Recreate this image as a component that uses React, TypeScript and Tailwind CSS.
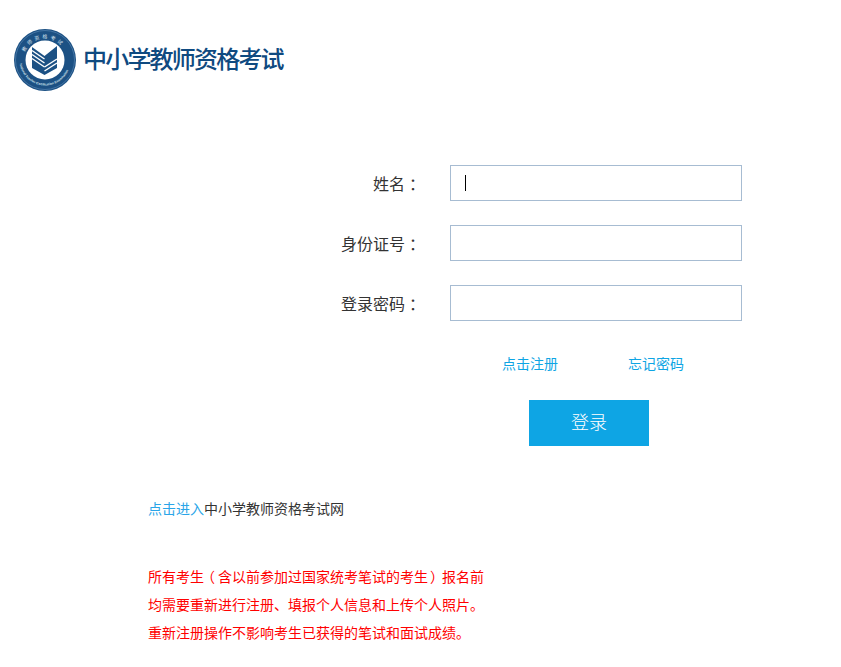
import React from 'react';

const Logo: React.FC = () => (
    <svg width="64" height="64" viewBox="0 0 64 64" className="shrink-0">
        <defs>
            <path id="arcTop" d="M10.5 32a21.5 21.5 0 0 1 43 0" />
            <path id="arcBottom" d="M6.5 32a25.5 25.5 0 0 0 51 0" />
        </defs>
        <circle cx="32" cy="32" r="31" fill="#1c5184" />
        <circle cx="32" cy="32" r="29.5" fill="none" stroke="#5f8db8" strokeWidth="0.6" />
        <circle cx="32" cy="32" r="19.5" fill="#fff" />
        <text fontSize="5" fill="#dbe6f0" fontFamily="'Noto Sans CJK SC', sans-serif" letterSpacing="2.6">
            <textPath href="#arcTop" startOffset="8">教师资格考试</textPath>
        </text>
        <text fontSize="3.2" fill="#dbe6f0" fontFamily="'Liberation Sans', sans-serif" fontWeight="700">
            <textPath href="#arcBottom" startOffset="4">National Teacher Certification Examination</textPath>
        </text>
        {/* open book */}
        <path d="M19 19 31.5 28 44 18 44 40 31.5 47 19 40Z" fill="#1c5184" />
        <g fill="none" stroke="#fff" strokeWidth="1.4">
            <path d="M19 22.5 31.5 31" />
            <path d="M19 26.5 31.5 35" />
            <path d="M19 30.5 31.5 39" />
            <path d="M44 31 31.5 39" />
            <path d="M44 35 31.5 43" />
        </g>
    </svg>
);

const fields = ['姓名', '身份证号', '登录密码'];

const App: React.FC = () => {
    return (
        <div className="w-[841px] h-[667px] overflow-hidden bg-white font-['Noto_Sans_CJK_SC',sans-serif]">
            <header className="flex items-start gap-[6px] pl-[13px] pt-[28px]">
                <Logo />
                <h1 className="mt-[14px] text-[24px] leading-[32px] tracking-[-1.8px] font-medium text-[#0f4a80]">中小学教师资格考试</h1>
            </header>

            <div className="mt-[73px] flex flex-col gap-[24px]">
                {fields.map((label, idx) => (
                    <div key={label} className="flex items-center">
                        <label className="w-[421px] text-right text-[16px] text-[#333]">
                            {label}
                            {/* colon sits centred in its box in the reference */}
                            <span className="inline-block translate-y-[1px] font-['Noto_Sans_CJK_KR',sans-serif]">：</span>
                        </label>
                        <div className="relative ml-[29px]">
                            <input className="block w-[292px] h-[36px] border border-[#a7bcd2] bg-white outline-none" />
                            {idx === 0 && <span className="absolute left-[15px] top-[10px] w-px h-[16px] bg-black" />}
                        </div>
                    </div>
                ))}
            </div>

            <div className="mt-[32px] mb-[27px] flex gap-[70px] pl-[502px] text-[14px] leading-[20px] text-[#0ea5e4]">
                <a>点击注册</a>
                <a>忘记密码</a>
            </div>

            <button className="block ml-[529px] w-[120px] h-[46px] pb-[3px] bg-[#0ea5e4] text-[18px] font-light text-white">登录</button>

            <div className="ml-[148px] mt-[52px] text-[14px] leading-[20px] text-[#333]">
                <a className="text-[#2aa5e8]">点击进入</a>中小学教师资格考试网
            </div>

            <div className="ml-[148px] mt-[44px] w-[360px] text-[14px] leading-[28px] text-[#f00]">
                <p>
                    所有考生<span className="inline-block -translate-x-[3px]">（</span>含以前参加过国家统考笔试的考生<span className="inline-block translate-x-[2px]">）</span>报名前
                </p>
                <p>均需要重新进行注册、填报个人信息和上传个人照片。</p>
                <p>重新注册操作不影响考生已获得的笔试和面试成绩。</p>
            </div>
        </div>
    );
};

export default App;
